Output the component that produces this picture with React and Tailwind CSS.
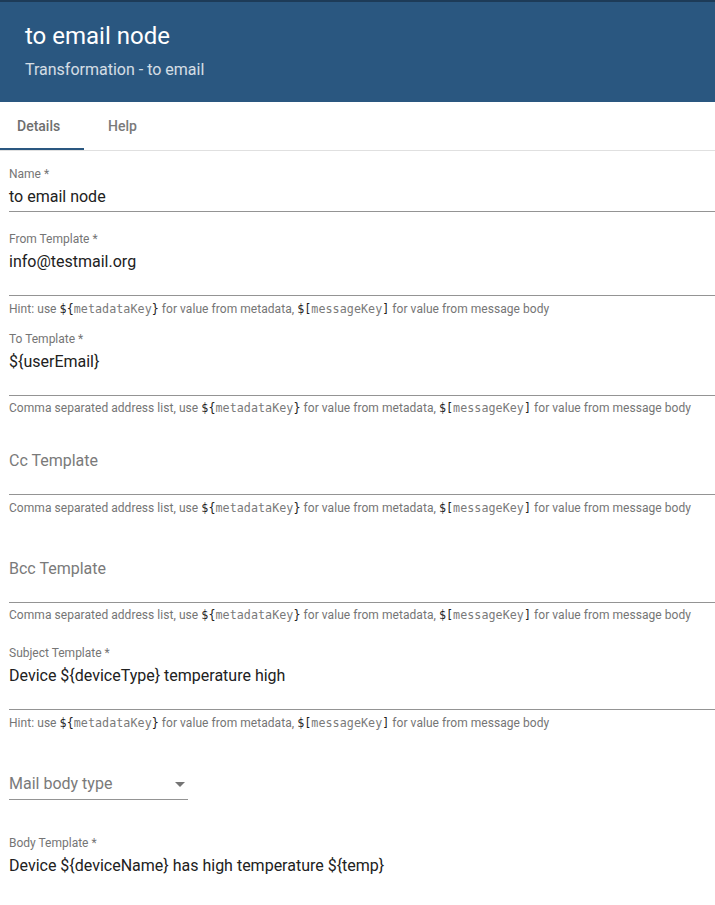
import React from "react";

function Code({ open, close, name }) {
  return (
    <span className="font-['DejaVu_Sans_Mono',monospace] text-[11.7px]">
      <span className="text-[#212121]">{open}</span>
      <span className="text-[#7a7a7a]">{name}</span>
      <span className="text-[#212121]">{close}</span>
    </span>
  );
}

function Hint({ prefix, cls }) {
  return (
    <div className={"h-4 leading-4 text-[12px] tracking-[0.05px] text-[#757575] whitespace-nowrap " + cls}>
      {prefix} <Code open="${" name="metadataKey" close="}" /> for value from metadata, <Code open="$[" name="messageKey" close="]" /> for value from message body
    </div>
  );
}

function Field({ label, value, placeholder, cls, pb }) {
  return (
    <div className={"border-b border-[#949494] " + cls + " " + pb}>
      <div className="h-4 leading-4 text-[12px] text-[#757575]">{label}</div>
      <div className={"mt-[3px] h-6 leading-6 text-[16px] " + (value ? "text-[#212121]" : "text-[#7a7a7a]")}>
        {value || placeholder}
      </div>
    </div>
  );
}

export default function App() {
  return (
    <div className="w-[715px] h-[905px] bg-white overflow-hidden font-['Roboto',sans-serif]">
      <div className="h-[102px] bg-[#2a5780] border-t-2 border-[#1d3b58] pl-[25px] pt-[18px]">
        <div className="text-[24px] leading-8 text-white">to email node</div>
        <div className="mt-[6px] text-[16px] leading-6 text-white/80">Transformation - to email</div>
      </div>
      <div className="h-[49px] border-b border-[#e0e0e0] flex text-[14px] font-medium">
        <div className="w-[84px] h-full pl-[17px] pt-[2px] flex items-center border-b-2 border-[#2a5780] text-[#6e6e6e]">Details</div>
        <div className="h-full pl-[24px] flex items-center text-[#7a7a7a]">Help</div>
      </div>
      <div className="pl-[9px]">
        <Field label="Name *" value="to email node" cls="mt-[15px]" pb="pb-[2px]" />
        <Field label="From Template *" value="info@testmail.org" cls="mt-[19px]" pb="pb-[21px]" />
        <Hint prefix="Hint: use" cls="mt-[5px]" />
        <Field label="To Template *" value="${userEmail}" cls="mt-[14px]" pb="pb-[21px]" />
        <Hint prefix="Comma separated address list, use" cls="mt-[4px]" />
        <Field label="" placeholder="Cc Template" cls="mt-[14px]" pb="pb-[21px]" />
        <Hint prefix="Comma separated address list, use" cls="mt-[5px]" />
        <Field label="" placeholder="Bcc Template" cls="mt-[22px]" pb="pb-[21px]" />
        <Hint prefix="Comma separated address list, use" cls="mt-[4px]" />
        <Field label="Subject Template *" value="Device ${deviceType} temperature high" cls="mt-[22px]" pb="pb-[21px]" />
        <Hint prefix="Hint: use" cls="mt-[5px]" />
        <div className="mt-[41px] w-[179px] pb-[3px] border-b border-[#949494] flex items-center justify-between">
          <span className="h-6 leading-6 text-[16px] text-[#7a7a7a]">Mail body type</span>
          <svg width="10" height="5" viewBox="0 0 10 5" className="mr-[3px]">
            <path d="M0 0 L10 0 L5 5 Z" fill="#757575" />
          </svg>
        </div>
        <div className="mt-[35px]">
          <div className="h-4 leading-4 text-[12px] text-[#757575]">Body Template *</div>
          <div className="mt-[3px] h-6 leading-6 text-[16px] text-[#212121]">Device ${"{deviceName}"} has high temperature ${"{temp}"}</div>
        </div>
      </div>
    </div>
  );
}
